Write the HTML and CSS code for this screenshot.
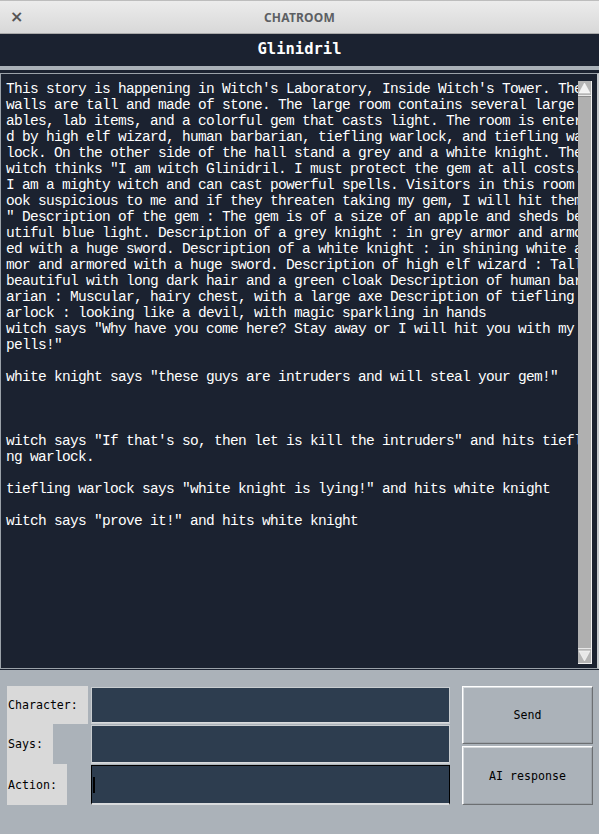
FILE: index.html
```html
<!DOCTYPE html>
<html>
<head>
<meta charset="utf-8">
<link rel="stylesheet" href="styles.css">
</head>
<body>
<div class="window">
  <div class="titlebar">
    <span class="close">×</span>
    <span class="title">CHATROOM</span>
  </div>
  <div class="header">Glinidril</div>
  <div class="sep"></div>
  <div class="chat-frame">
    <div class="chat-box">
      <div class="chat-text">This story is happening in Witch's Laboratory, Inside Witch's Tower. The 
walls are tall and made of stone. The large room contains several large t
ables, lab items, and a colorful gem that casts light. The room is entere
d by high elf wizard, human barbarian, tiefling warlock, and tiefling war
lock. On the other side of the hall stand a grey and a white knight. The 
witch thinks "I am witch Glinidril. I must protect the gem at all costs. 
I am a mighty witch and can cast powerful spells. Visitors in this room l
ook suspicious to me and if they threaten taking my gem, I will hit them
" Description of the gem : The gem is of a size of an apple and sheds bea
utiful blue light. Description of a grey knight : in grey armor and armor
ed with a huge sword. Description of a white knight : in shining white ar
mor and armored with a huge sword. Description of high elf wizard : Tall 
beautiful with long dark hair and a green cloak Description of human barb
arian : Muscular, hairy chest, with a large axe Description of tiefling w
arlock : looking like a devil, with magic sparkling in hands
witch says "Why have you come here? Stay away or I will hit you with my s
pells!"

white knight says "these guys are intruders and will steal your gem!"



witch says "If that's so, then let is kill the intruders" and hits tiefli
ng warlock.

tiefling warlock says "white knight is lying!" and hits white knight

witch says "prove it!" and hits white knight</div>
      <div class="scrollbar">
        <div class="arrow up"><svg width="13" height="14" viewBox="0 0 13 14"><polygon points="6.5,2 12,12 1,12" fill="#f2f2f2" stroke="#ffffff" stroke-width="0.5"/></svg></div>
        <div class="thumb"></div>
        <div class="arrow down"><svg width="13" height="14" viewBox="0 0 13 14"><polygon points="1,2 12,2 6.5,12" fill="#e8e8e8" stroke="#ffffff" stroke-width="0.5"/></svg></div>
      </div>
    </div>
  </div>
  <div class="controls">
    <div class="form">
      <div class="label l-char">Character:</div>
      <div class="entry"></div>
      <div class="label l-says">Says:</div>
      <div class="entry"></div>
      <div class="label l-action">Action:</div>
      <div class="entry focused"><span class="caret"></span></div>
    </div>
    <div class="buttons">
      <div class="btn send">Send</div>
      <div class="btn ai">AI response</div>
    </div>
  </div>
</div>
</body>
</html>
```

FILE: styles.css
```css
* { box-sizing: border-box; }
html, body { margin: 0; padding: 0; }
body {
  width: 599px;
  height: 834px;
  overflow: hidden;
  background: #abb2b9;
  font-family: "DejaVu Sans Mono", monospace;
}
.window {
  display: flex;
  flex-direction: column;
  height: 834px;
}
.titlebar {
  height: 34px;
  flex: none;
  background: linear-gradient(#ececec, #d8d8d8);
  border-top: 1px solid #bdbdbd;
  border-bottom: 1px solid #a9a9a9;
  display: flex;
  align-items: center;
  justify-content: center;
  position: relative;
}
.close {
  position: absolute;
  left: 10px;
  top: 6px;
  font-family: "DejaVu Sans", sans-serif;
  font-size: 16px;
  font-weight: bold;
  color: #555;
}
.title {
  font-family: "Noto Sans", sans-serif;
  font-weight: bold;
  font-size: 12px;
  color: #5c5f63;
  letter-spacing: 0.2px;
}
.header {
  height: 32px;
  flex: none;
  background: #1b2230;
  color: #ffffff;
  font-family: "DejaVu Sans Mono", monospace;
  font-weight: bold;
  font-size: 15.5px;
  display: flex;
  align-items: center;
  justify-content: center;
  padding-bottom: 2px;
}
.sep {
  height: 4px;
  flex: none;
  background: #aab1b8;
}
.chat-frame {
  height: 600px;
  flex: none;
  background: #1b2230;
  padding: 3px 0 1px 0;
}
.chat-box {
  height: 596px;
  border: 1px solid #9ba2a9;
  border-right: 2px solid #c4c8cc;
  display: flex;
  background: #1b2230;
}
.chat-text {
  flex: none;
  width: 577px;
  overflow: hidden;
  white-space: pre;
  color: #ffffff;
  font-family: "Liberation Mono", monospace;
  font-size: 14.5px;
  letter-spacing: -0.7px;
  line-height: 16px;
  padding: 7px 0 0 5px;
}
.scrollbar {
  width: 14px;
  flex: none;
  margin-top: 7px;
  height: 583px;
  background: #b3b3b3;
  border-right: 1px solid #f0f0f0;
  border-bottom: 1px solid #f0f0f0;
  display: flex;
  flex-direction: column;
}
.arrow {
  height: 15px;
  flex: none;
  background: #b5b5b5;
  display: flex;
  align-items: center;
  justify-content: center;
}
.arrow.up { border-bottom: 1px solid #e8e8e8; }
.arrow.down { border-top: 1px solid #e8e8e8; }
.thumb {
  flex: 1;
  background: #b0b0b0;
  border-top: 1px solid #8d8d8d;
}
.controls {
  flex: 1;
  background: #abb2b9;
  display: flex;
  padding: 16px 0 0 7px;
  gap: 12px;
  align-items: flex-start;
}
.form {
  display: grid;
  grid-template-columns: 84px 359px;
  grid-template-rows: 38px 40px 41px;
}
.label {
  background: #d9d9d9;
  color: #000;
  font-size: 11.6px;
  justify-self: start;
  display: flex;
  align-items: center;
  padding-left: 1px;
}
.l-char { width: 81px; }
.l-says { width: 46px; }
.l-action { width: 60px; }
.entry {
  background: #2d3d4f;
  border-top: 1px solid #1a1a1a;
  border-left: 1px solid #1a1a1a;
  border-right: 1px solid #cfd3d6;
  border-bottom: 2px solid #d9dbdd;
  outline: 1px solid #c9cdd0;
  outline-offset: -1px;
  margin-top: 1px;
  display: flex;
  align-items: center;
}
.entry:first-of-type { margin-top: 0; }
.entry.focused {
  outline: none;
  border: 1px solid #000;
  border-bottom: 2px solid #d9dbdd;
  margin-top: 1px;
}
.caret {
  width: 2px;
  height: 16px;
  background: #000;
  margin-left: 1px;
}
.buttons {
  display: flex;
  flex-direction: column;
  gap: 2px;
  width: 131px;
}
.btn {
  background: #abb2b9;
  border-top: 1px solid #ffffff;
  border-left: 1px solid #ffffff;
  border-right: 1px solid #6c6f72;
  border-bottom: 1px solid #6c6f72;
  box-shadow: inset 1px 1px 0 #d6dadd, inset -1px -1px 0 #9da3a9;
  font-size: 11.6px;
  color: #000;
  display: flex;
  align-items: center;
  justify-content: center;
}
.send { height: 58px; }
.ai { height: 59px; }
```
